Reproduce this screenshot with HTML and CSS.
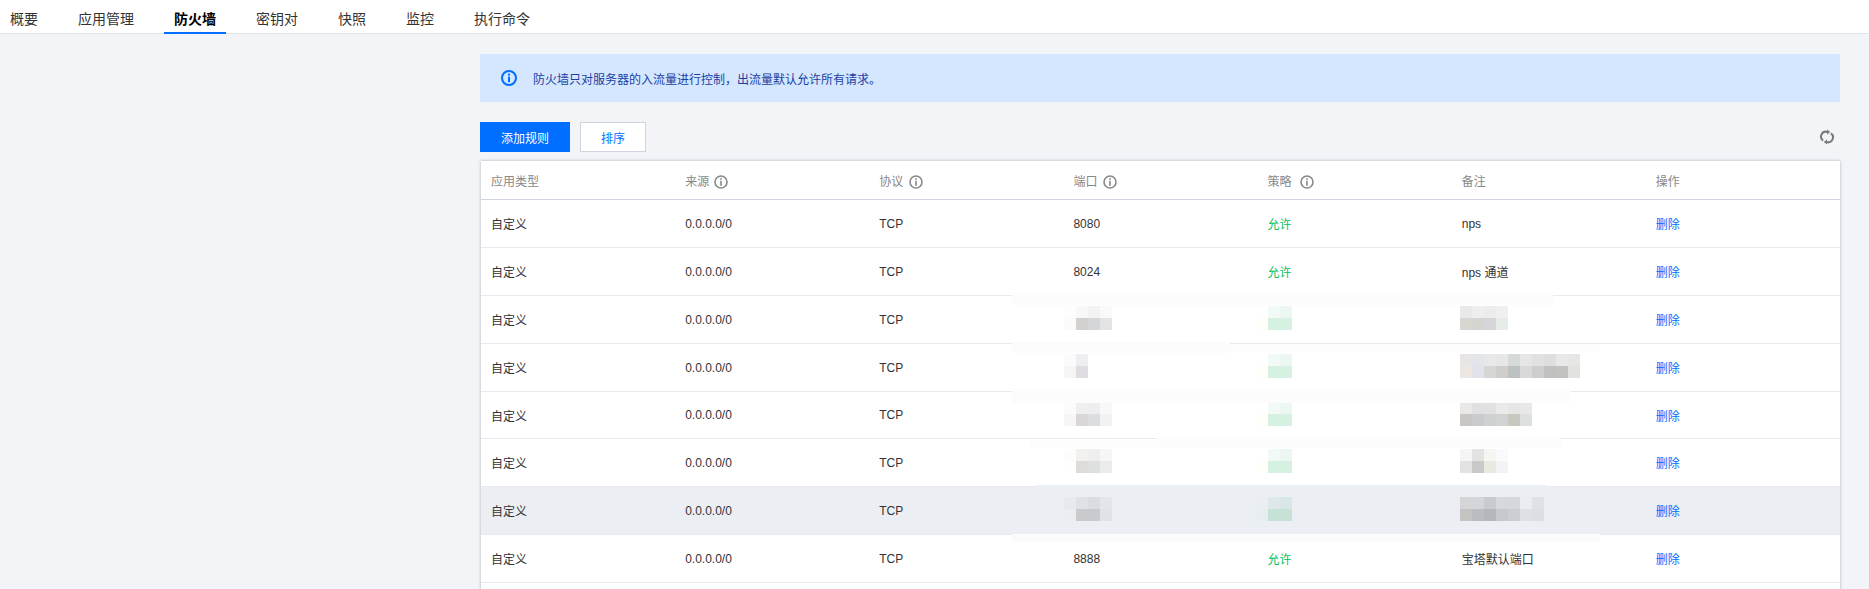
FILE: index.html
```html
<!DOCTYPE html>
<html lang="zh-CN">
	<head>
		<meta charset="utf-8" />
		<title>防火墙</title>
		<link rel="stylesheet" href="styles.css">
	</head>

	<body>
		<nav class="tabs">
			<a class="tab">概要</a>
			<a class="tab">应用管理</a>
			<a class="tab active">防火墙</a>
			<a class="tab">密钥对</a>
			<a class="tab">快照</a>
			<a class="tab">监控</a>
			<a class="tab">执行命令</a>
		</nav>

		<main class="content">
			<div class="notice">
				<svg class="notice-icon" viewBox="0 0 16 16"><circle cx="8" cy="8" r="7" fill="none" stroke="#006eff" stroke-width="2"/><rect x="7" y="3.6" width="2" height="2" fill="#006eff"/><rect x="7" y="6.6" width="2" height="5.6" fill="#006eff"/></svg>
				<span>防火墙只对服务器的入流量进行控制，出流量默认允许所有请求。</span>
			</div>

			<div class="toolbar">
				<button class="btn btn-primary">添加规则</button>
				<button class="btn">排序</button>
				<svg class="refresh" viewBox="0 0 16 16"><path d="M4.1 11.6A4.9 4.9 0 0 1 8.6 3M11.9 4.4A4.9 4.9 0 0 1 7.4 13" fill="none" stroke="#7a7a7a" stroke-width="2"/><path d="M8 .4l3.2 2.6L8 5.6zM8 15.6l-3.2-2.6L8 10.4z" fill="#7a7a7a"/></svg>
			</div>

			<div class="table-box">
				<table class="rules">
					<tr class="heading">
						<td>应用类型</td>
						<td>来源 <svg class="tip" viewBox="0 0 14 14"><use href="#tip"/></svg></td>
						<td>协议 <svg class="tip" viewBox="0 0 14 14"><use href="#tip"/></svg></td>
						<td>端口 <svg class="tip" viewBox="0 0 14 14"><use href="#tip"/></svg></td>
						<td>策略 <svg class="tip tip-wide" viewBox="0 0 14 14"><use href="#tip"/></svg></td>
						<td>备注</td>
						<td>操作</td>
					</tr>
					<tr>
						<td>自定义</td><td>0.0.0.0/0</td><td>TCP</td><td>8080</td>
						<td class="allow">允许</td><td>nps</td><td><a class="del">删除</a></td>
					</tr>
					<tr>
						<td>自定义</td><td>0.0.0.0/0</td><td>TCP</td><td>8024</td>
						<td class="allow">允许</td><td>nps 通道</td><td><a class="del">删除</a></td>
					</tr>
					<tr>
						<td>自定义</td><td>0.0.0.0/0</td><td>TCP</td>
						<td><svg class="mosaic mosaic-port" width="48" height="24"><rect x="0" width="12" height="12" fill="#fdfdfb"/><rect x="12" width="12" height="12" fill="#f8f8f8"/><rect x="24" width="12" height="12" fill="#f3f3f3"/><rect x="36" width="12" height="12" fill="#f9f9f9"/><rect x="0" y="12" width="12" height="12" fill="#fbfbf9"/><rect x="12" y="12" width="12" height="12" fill="#d4d0cf"/><rect x="24" y="12" width="12" height="12" fill="#d5d6da"/><rect x="36" y="12" width="12" height="12" fill="#e4e4e4"/></svg></td>
						<td><svg class="mosaic mosaic-status" width="36" height="24"><use href="#status"/></svg></td>
						<td><svg class="mosaic mosaic-note" width="48" height="24"><rect x="0" width="12" height="12" fill="#e9e9e9"/><rect x="12" width="12" height="12" fill="#eeeeee"/><rect x="24" width="12" height="12" fill="#ececec"/><rect x="36" width="12" height="12" fill="#eeefee"/><rect x="0" y="12" width="12" height="12" fill="#d7d6d1"/><rect x="12" y="12" width="12" height="12" fill="#d5d5d0"/><rect x="24" y="12" width="12" height="12" fill="#d5d5da"/><rect x="36" y="12" width="12" height="12" fill="#e6ece8"/></svg></td>
						<td><a class="del">删除</a></td>
					</tr>
					<tr>
						<td>自定义</td><td>0.0.0.0/0</td><td>TCP</td>
						<td><svg class="mosaic mosaic-port" width="24" height="24"><rect x="0" width="12" height="12" fill="#fbfbfb"/><rect x="12" width="12" height="12" fill="#eeeff2"/><rect x="0" y="12" width="12" height="12" fill="#f5f5f3"/><rect x="12" y="12" width="12" height="12" fill="#dfdde1"/></svg></td>
						<td><svg class="mosaic mosaic-status" width="36" height="24"><use href="#status"/></svg></td>
						<td><svg class="mosaic mosaic-note" width="120" height="24"><rect x="0" width="12" height="12" fill="#e9e5e4"/><rect x="12" width="12" height="12" fill="#e2e5ea"/><rect x="24" width="12" height="12" fill="#e8e8e8"/><rect x="36" width="12" height="12" fill="#e7e7e7"/><rect x="48" width="12" height="12" fill="#d6d9d9"/><rect x="60" width="12" height="12" fill="#e5e7e6"/><rect x="72" width="12" height="12" fill="#e1e1df"/><rect x="84" width="12" height="12" fill="#dedee0"/><rect x="96" width="12" height="12" fill="#e8e8e8"/><rect x="108" width="12" height="12" fill="#e6e6e4"/><rect x="0" y="12" width="12" height="12" fill="#ede7e3"/><rect x="12" y="12" width="12" height="12" fill="#e0e3e9"/><rect x="24" y="12" width="12" height="12" fill="#d6d7d3"/><rect x="36" y="12" width="12" height="12" fill="#cfcecb"/><rect x="48" y="12" width="12" height="12" fill="#bcc1c2"/><rect x="60" y="12" width="12" height="12" fill="#d9d9d9"/><rect x="72" y="12" width="12" height="12" fill="#cdcdcd"/><rect x="84" y="12" width="12" height="12" fill="#c0c1c1"/><rect x="96" y="12" width="12" height="12" fill="#c2c2c0"/><rect x="108" y="12" width="12" height="12" fill="#e2e2e0"/></svg></td>
						<td><a class="del">删除</a></td>
					</tr>
					<tr class="short">
						<td>自定义</td><td>0.0.0.0/0</td><td>TCP</td>
						<td><svg class="mosaic mosaic-port" width="48" height="24"><rect x="0" width="12" height="12" fill="#fbfbfb"/><rect x="12" width="12" height="12" fill="#efefef"/><rect x="24" width="12" height="12" fill="#eeeef0"/><rect x="36" width="12" height="12" fill="#f8f8f8"/><rect x="0" y="12" width="12" height="12" fill="#f6f6f4"/><rect x="12" y="12" width="12" height="12" fill="#dad7d8"/><rect x="24" y="12" width="12" height="12" fill="#dcdde0"/><rect x="36" y="12" width="12" height="12" fill="#f3f2f2"/></svg></td>
						<td><svg class="mosaic mosaic-status" width="36" height="24"><use href="#status"/></svg></td>
						<td><svg class="mosaic mosaic-note" width="72" height="24"><rect x="0" width="12" height="12" fill="#e9e8e6"/><rect x="12" width="12" height="12" fill="#e0e0e2"/><rect x="24" width="12" height="12" fill="#e1e1e1"/><rect x="36" width="12" height="12" fill="#eaeaea"/><rect x="48" width="12" height="12" fill="#e6e6e6"/><rect x="60" width="12" height="12" fill="#e8e8e6"/><rect x="0" y="12" width="12" height="12" fill="#c8c7c5"/><rect x="12" y="12" width="12" height="12" fill="#c9cbcd"/><rect x="24" y="12" width="12" height="12" fill="#cfd1d0"/><rect x="36" y="12" width="12" height="12" fill="#d1d2d3"/><rect x="48" y="12" width="12" height="12" fill="#c8c8c0"/><rect x="60" y="12" width="12" height="12" fill="#dce0de"/></svg></td>
						<td><a class="del">删除</a></td>
					</tr>
					<tr>
						<td>自定义</td><td>0.0.0.0/0</td><td>TCP</td>
						<td><svg class="mosaic mosaic-port" width="48" height="24"><rect x="0" width="12" height="12" fill="#fcfcfa"/><rect x="12" width="12" height="12" fill="#f2f1ef"/><rect x="24" width="12" height="12" fill="#eeeef0"/><rect x="36" width="12" height="12" fill="#f6f6f6"/><rect x="0" y="12" width="12" height="12" fill="#fefefc"/><rect x="12" y="12" width="12" height="12" fill="#dedbda"/><rect x="24" y="12" width="12" height="12" fill="#dedfdf"/><rect x="36" y="12" width="12" height="12" fill="#ebebeb"/></svg></td>
						<td><svg class="mosaic mosaic-status" width="36" height="24"><use href="#status"/></svg></td>
						<td><svg class="mosaic mosaic-note" width="48" height="24"><rect x="0" width="12" height="12" fill="#f5f5f5"/><rect x="12" width="12" height="12" fill="#e3e3e3"/><rect x="24" width="12" height="12" fill="#f5f5f2"/><rect x="36" width="12" height="12" fill="#fafafc"/><rect x="0" y="12" width="12" height="12" fill="#e3e3e3"/><rect x="12" y="12" width="12" height="12" fill="#c9c9c9"/><rect x="24" y="12" width="12" height="12" fill="#e9e9e2"/><rect x="36" y="12" width="12" height="12" fill="#f2f2f7"/></svg></td>
						<td><a class="del">删除</a></td>
					</tr>
					<tr class="hover">
						<td>自定义</td><td>0.0.0.0/0</td><td>TCP</td>
						<td><svg class="mosaic mosaic-port" width="48" height="24"><rect x="0" width="12" height="12" fill="#e8e9ee"/><rect x="12" width="12" height="12" fill="#dee1e5"/><rect x="24" width="12" height="12" fill="#dbdce1"/><rect x="36" width="12" height="12" fill="#e4e5ea"/><rect x="0" y="12" width="12" height="12" fill="#ebedf1"/><rect x="12" y="12" width="12" height="12" fill="#cacacd"/><rect x="24" y="12" width="12" height="12" fill="#c8cad0"/><rect x="36" y="12" width="12" height="12" fill="#e0e2e7"/></svg></td>
						<td><svg class="mosaic mosaic-status" width="36" height="24"><rect x="0" width="12" height="12" fill="#eaedf1"/><rect x="12" width="12" height="12" fill="#dee8e9"/><rect x="24" width="12" height="12" fill="#d8e7e5"/><rect x="0" y="12" width="12" height="12" fill="#e8edef"/><rect x="12" y="12" width="12" height="12" fill="#c4e2d6"/><rect x="24" y="12" width="12" height="12" fill="#c6e2d7"/></svg></td>
						<td><svg class="mosaic mosaic-note" width="84" height="24"><rect x="0" width="12" height="12" fill="#d5d5d7"/><rect x="12" width="12" height="12" fill="#d4d5d8"/><rect x="24" width="12" height="12" fill="#c9cacf"/><rect x="36" width="12" height="12" fill="#d7d8dd"/><rect x="48" width="12" height="12" fill="#d4d7db"/><rect x="60" width="12" height="12" fill="#e9ecf0"/><rect x="72" width="12" height="12" fill="#e0e1e6"/><rect x="0" y="12" width="12" height="12" fill="#c3c3c1"/><rect x="12" y="12" width="12" height="12" fill="#b9bcc0"/><rect x="24" y="12" width="12" height="12" fill="#b5b8bb"/><rect x="36" y="12" width="12" height="12" fill="#c5c9cd"/><rect x="48" y="12" width="12" height="12" fill="#cacdd1"/><rect x="60" y="12" width="12" height="12" fill="#dde0e4"/><rect x="72" y="12" width="12" height="12" fill="#dcdfe2"/></svg></td>
						<td><a class="del">删除</a></td>
					</tr>
					<tr>
						<td>自定义</td><td>0.0.0.0/0</td><td>TCP</td><td>8888</td>
						<td class="allow">允许</td><td>宝塔默认端口</td><td><a class="del">删除</a></td>
					</tr>
					<tr>
						<td colspan="7"></td>
					</tr>
				</table>

				<!-- leftovers of the blur painted over the row lines -->
				<div class="smear smear-a"></div>
				<div class="smear smear-b"></div>
				<div class="smear smear-c"></div>
				<div class="smear smear-d"></div>
				<div class="smear smear-e"></div>
				<div class="smear smear-f"></div>
				<div class="smear smear-g"></div>
				<div class="smear smear-h"></div>
			</div>
		</main>

		<svg class="defs" width="0" height="0">
			<symbol id="tip" viewBox="0 0 14 14">
				<circle cx="7" cy="7" r="6" fill="none" stroke="#888" stroke-width="1.6"/>
				<rect x="6.2" y="3.2" width="1.6" height="1.6" fill="#888"/>
				<rect x="6.2" y="5.8" width="1.6" height="5" fill="#888"/>
			</symbol>
			<symbol id="status" viewBox="0 0 36 24" width="36" height="24">
				<rect x="12" width="12" height="12" fill="#f1faf6"/>
				<rect x="24" width="12" height="12" fill="#ebf7f0"/>
				<rect x="0" y="12" width="12" height="12" fill="#fefefa"/>
				<rect x="12" y="12" width="12" height="12" fill="#d4f1e2"/>
				<rect x="24" y="12" width="12" height="12" fill="#d6f1e2"/>
			</symbol>
		</svg>
	</body>
</html>
```

FILE: styles.css
```css
html, body {
	height: 100%;
}

body {
	margin: 0;
	overflow: hidden;
	background: #f2f4f8;
	color: #333;
	font-family: "Liberation Sans", Arial, "Noto Sans CJK SC", sans-serif;
	font-size: 12px;
}

.tabs {
	display: flex;
	height: 33px;
	background: #fff;
	border-bottom: 1px solid #dfe3ea;
}

.tab {
	height: 34px;
	box-sizing: border-box;
	margin-right: 20px;
	padding: 0 10px;
	font-size: 14px;
	line-height: 38px;
	color: #333;
}

.tab.active {
	font-weight: bold;
	color: #000;
	border-bottom: 2px solid #006eff;
}

.content {
	margin: 20px 29px 0 480px;
}

.notice {
	display: flex;
	align-items: center;
	height: 48px;
	padding-left: 21px;
	background: #d5e7ff;
	color: #1a3fa3;
}

.notice-icon {
	width: 16px;
	height: 16px;
	margin-right: 16px;
}

.toolbar {
	display: flex;
	align-items: center;
	height: 30px;
	margin-top: 20px;
}

.btn {
	width: 66px;
	height: 30px;
	margin-right: 10px;
	padding: 0;
	border: 1px solid #cfd5de;
	background: #fff;
	color: #006eff;
	font-family: inherit;
	font-size: 12px;
}

.btn-primary {
	width: 90px;
	border: 0;
	background: #006eff;
	color: #fff;
}

.refresh {
	width: 16px;
	height: 16px;
	margin-left: auto;
	margin-right: 5px;
}

.table-box {
	position: relative;
	margin-top: 9px;
	margin-left: 1px;
	background: #fff;
	box-shadow: 0 0 3px rgba(54, 58, 80, 0.35);
}

.rules {
	width: 100%;
	table-layout: fixed;
	border-collapse: separate;
	border-spacing: 0;
}

.rules td {
	box-sizing: border-box;
	height: 48px;
	padding: 0 10px;
	border-bottom: 1px solid #e7eaef;
	vertical-align: middle;
}

.rules tr.heading td {
	height: 39px;
	color: #888;
	border-bottom-color: #cfd5de;
}

.rules tr.short td {
	height: 47px;
}

.rules tr.hover td {
	background: #ebeef3;
}

.allow {
	color: #0abf5b;
}

.del {
	color: #006eff;
}

.tip {
	width: 14px;
	height: 14px;
	margin-left: 2px;
	vertical-align: -3px;
}

.tip-wide {
	margin-left: 5px;
}

.mosaic {
	display: block;
	margin-top: -3px;
}

.mosaic-port {
	margin-left: -9px;
}

.mosaic-status {
	margin-left: -12px;
}

.mosaic-note {
	margin-left: -2px;
}

/* offsets are from the table box, which starts at 481,161 */
.smear {
	position: absolute;
	background: #fcfcfc;
}

.smear-a {
	left: 531px;
	top: 132px;
	width: 541px;
	height: 12px;
}

.smear-b {
	left: 531px;
	top: 181px;
	width: 218px;
	height: 11px;
}

.smear-c {
	left: 749px;
	top: 183px;
	width: 370px;
	height: 8px;
	background: #fdfdfd;
}

.smear-d {
	left: 531px;
	top: 228px;
	width: 558px;
	height: 14px;
}

.smear-e {
	left: 676px;
	top: 276px;
	width: 404px;
	height: 11px;
}

.smear-f {
	left: 549px;
	top: 279px;
	width: 127px;
	height: 8px;
	background: #fdfdfd;
}

.smear-g {
	left: 556px;
	top: 324px;
	width: 509px;
	height: 2px;
	background: #ebeef3;
}

.smear-h {
	left: 531px;
	top: 373px;
	width: 588px;
	height: 8px;
	background: #fbfbfb;
}

.defs {
	position: absolute;
}
```
